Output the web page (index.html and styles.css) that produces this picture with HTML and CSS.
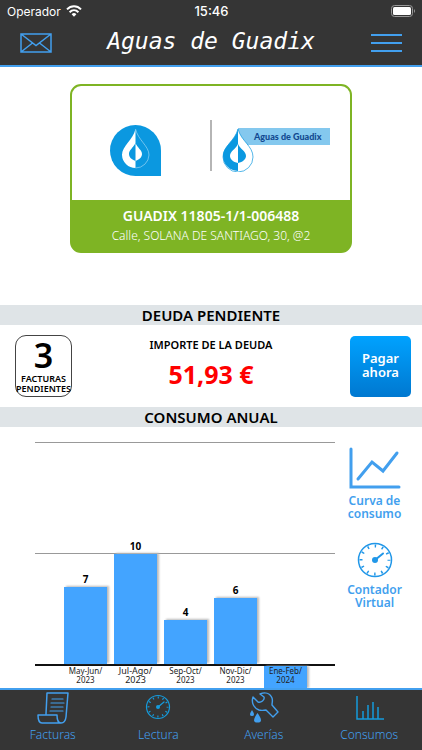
FILE: index.html
```html
<!DOCTYPE html>
<html lang="es">
<head>
    <meta charset="UTF-8">
    <meta name="viewport" content="width=device-width, initial-scale=1.0">
    <title>Aguas de Guadix</title>
    <link rel="stylesheet" href="styles.css">
</head>
<body>
    <header>
        <div class="status">
            <span class="operador">Operador
                <svg width="16" height="12" viewBox="0 0 16 12" fill="none" stroke="#fff" stroke-width="2">
                    <path d="M1 4.4C5 .3 11 .3 15 4.4M3.6 7.2c2.600-2.600 6.200-2.600 8.800 0"/>
                    <path d="M5.600 9.200Q8 7 10.400 9.200L8 11.700z" fill="#fff" stroke="none"/>
                </svg>
            </span>
            <span class="hora">15:46</span>
            <svg class="bateria" width="25" height="12" viewBox="0 0 25 12">
                <rect x=".5" y=".5" width="21" height="11" rx="3" fill="none" stroke="#999"/>
                <rect x="2" y="2" width="18" height="8" rx="1.500" fill="#fff"/>
                <path d="M23 4q2 2 0 4z" fill="#999"/>
            </svg>
        </div>
        <div class="barra">
            <button class="icono" aria-label="Mensajes">
                <svg width="32" height="20" viewBox="0 0 32 20" fill="none" stroke="#429fee" stroke-width="1.500">
                    <path d="M1 1h30v18H1zM1 1l15 11.500L31 1M1 19l11.500-9M31 19l-11.500-9"/>
                </svg>
            </button>
            <h1>Aguas de Guadix</h1>
            <button class="icono" aria-label="Menú">
                <svg width="32" height="20" viewBox="0 0 32 20" stroke="#429fee" stroke-width="2">
                    <path d="M1 2h31M1 10h31M1 18h31"/>
                </svg>
            </button>
        </div>
    </header>

    <main>
        <section class="contrato">
            <div class="logos">
                <svg width="51" height="51" viewBox="0 0 51 51">
                    <path d="M51 51H25.500A25.500 25.500 0 1 1 51 25.500z" fill="#0b98e0"/>
                    <path d="M25.500 4C23 15 12 21 12 30a13.500 13.500 0 0 0 13.500 13V36C21 34 19 32 19 29c0-4 4-6 6.500-11z" fill="#fff"/>
                    <path d="M25.500 4C28 15 39 21 39 30a13.500 13.500 0 0 1-13.500 13" fill="none" stroke="#9bd4f3" stroke-width=".7"/>
                    <path d="M25.500 18c2 5 6.500 7 6.500 11 0 3-2 5-6.500 7z" fill="#fff"/>
                </svg>
                <span class="separador"></span>
                <div class="marca">
                    <svg width="32" height="44" viewBox="0 0 32 44">
                        <path d="M16 1C13 13 1 18 1 29a15 15 0 0 0 30 0C31 18 19 13 16 1z" fill="#fff" stroke="#0b98e0" stroke-width=".7"/>
                        <path d="M16 1C13 13 1 18 1 28a15 15 0 0 0 15 15V35C11 34 8 31 8 28c0-5 6-7 8-12z" fill="#0b98e0"/>
                        <path d="M16 16c2 5 8 7 8 12 0 3-3 6-8 7z" fill="#0b98e0"/>
                    </svg>
                    <span>Aguas de Guadix</span>
                </div>
            </div>
            <div class="datos">
                <strong>GUADIX 11805-1/1-006488</strong>
                <span>Calle, SOLANA DE SANTIAGO, 30, @2</span>
            </div>
        </section>

        <h2>DEUDA PENDIENTE</h2>
        <section class="deuda">
            <div class="pendientes">
                <strong>3</strong>
                <span>FACTURAS PENDIENTES</span>
            </div>
            <div class="importe">
                <span>IMPORTE DE LA DEUDA</span>
                <strong>51,93 €</strong>
            </div>
            <button class="pagar">Pagar ahora</button>
        </section>

        <h2>CONSUMO ANUAL</h2>
        <section class="consumo">
            <div class="grafica">
                <div class="barras">
                    <div class="columna"><span>7</span><div class="valor" style="height: 35%"></div></div>
                    <div class="columna"><span>10</span><div class="valor" style="height: 50%"></div></div>
                    <div class="columna"><span>4</span><div class="valor" style="height: 20%"></div></div>
                    <div class="columna"><span>6</span><div class="valor" style="height: 30%"></div></div>
                    <div class="columna"></div>
                </div>
                <div class="meses">
                    <span>May-Jun/<br>2023</span>
                    <span class="grande">Jul-Ago/<br>2023</span>
                    <span>Sep-Oct/<br>2023</span>
                    <span>Nov-Dic/<br>2023</span>
                    <span class="negativo">Ene-Feb/<br>2024</span>
                </div>
            </div>
            <div class="enlaces">
                <a href="#curva">
                    <svg width="52" height="42" viewBox="0 0 52 42" fill="none" stroke="#429fee" stroke-width="3" stroke-linecap="round">
                        <path d="M2 2v38h48"/>
                        <path d="M9 32L23 15l11 9L48 6"/>
                    </svg>
                    Curva de consumo
                </a>
                <a href="#contador">
                    <svg width="36" height="36" viewBox="0 0 36 36" fill="none" stroke="#2197e8" stroke-width="1.500" stroke-linecap="round">
                        <circle cx="18" cy="18" r="16.500"/>
                        <circle cx="18" cy="18" r="14" stroke-dasharray="1.500 5.830" stroke-width="3" stroke-linecap="butt" stroke-dashoffset=".75"/>
                        <path d="M18 18l8-6.500" stroke-width="2"/>
                        <circle cx="18" cy="18" r="3" fill="#2197e8" stroke="none"/>
                    </svg>
                    Contador Virtual
                </a>
            </div>
        </section>
    </main>

    <nav>
        <a href="#facturas">
            <svg width="32" height="32" viewBox="0 0 32 32" fill="none" stroke="#429fee" stroke-width="1.500" stroke-linejoin="round" stroke-linecap="round">
                <path d="M9 22L10 1h21l-2 24c-.5 4-2 6-5 6H5c-3 0-4-3-4-8h19c0 5 1 8 4 8"/>
                <path d="M15 7h11M14 11h13M14 15h12M13 19h13" stroke-width="1.200"/>
            </svg>
            Facturas
        </a>
        <a href="#lectura">
            <svg width="32" height="32" viewBox="0 0 32 32" fill="none" stroke="#159bdc" stroke-width="1.200">
                <circle cx="16" cy="15" r="11.500"/>
                <circle cx="16" cy="15" r="9.500" stroke-dasharray="1.200 3.774" stroke-width="2" stroke-dashoffset=".6"/>
                <path d="M16 15l6-5" stroke-linecap="round"/>
                <circle cx="16" cy="15" r="2" fill="#159bdc" stroke="none"/>
            </svg>
            Lectura
        </a>
        <a href="#averias">
            <svg width="32" height="32" viewBox="0 0 32 32" fill="none" stroke="#429fee" stroke-width="1.400" stroke-linejoin="round">
                <path d="M12 2c5-2 10-1 12 4 1 3 0 4 0 7l6 7-5 5-7-7c-2 0-4 1-7 0-5-2-8-7-6-13l5 5c3 1 7-2 6-5z"/>
                <path d="M9.500 21q7 9.500 0 9.500t0-9.500zM4 18q4 6 0 6t0-6z" fill="#429fee" stroke="none"/>
            </svg>
            Averías
        </a>
        <a href="#consumos">
            <svg width="32" height="32" viewBox="0 0 32 32" fill="none" stroke="#159bdc" stroke-width="1.500">
                <path d="M4 4v23h27M10 27v-8M15 27V13M20 27V10M25 27V15"/>
            </svg>
            Consumos
        </a>
    </nav>
</body>
</html>
```
FILE: styles.css
```css
* {
    box-sizing: border-box;
}
body {
    font-family: "Noto Sans", "Open Sans", sans-serif;
    margin: 0;
    min-height: 100vh;
    display: flex;
    flex-direction: column;
    background-color: #fff;
    color: #000;
}
svg {
    display: block;
}
button {
    font-family: inherit;
    border: none;
    cursor: pointer;
}
a {
    text-decoration: none;
    color: #429fee;
}
header {
    background-color: #353535;
    border-bottom: 2px solid #429fee;
    color: #fff;
    padding-bottom: 5px;
}
.status {
    display: grid;
    grid-template-columns: 1fr auto 1fr;
    align-items: center;
    height: 22px;
    padding: 0 6px 0 7px;
    font-family: Inter, sans-serif;
    font-size: 12px;
}
.operador {
    display: flex;
    align-items: center;
    gap: 5px;
}
.hora {
    font-size: 13px;
    font-weight: 500;
}
.bateria {
    justify-self: end;
}
.barra {
    display: flex;
    align-items: center;
    justify-content: space-between;
    height: 38px;
    padding: 0 20px;
}
.icono {
    padding: 0;
    margin-top: 4px;
    background: none;
}
h1 {
    margin: 0;
    font-family: "DejaVu Sans Mono", monospace;
    font-size: 23px;
    font-weight: normal;
    font-style: italic;
}
main {
    flex: 1;
    display: flex;
    flex-direction: column;
}
.contrato {
    margin: 17px 70px 52px;
    border: 2px solid #7eb424;
    border-radius: 11px;
    background-color: #7eb424;
    overflow: hidden;
}
.logos {
    display: flex;
    align-items: center;
    justify-content: center;
    height: 114px;
    padding: 14px 0 0 18px;
    background-color: #fff;
}
.separador {
    width: 2px;
    height: 51px;
    margin: -10px 10px 0 49px;
    background-color: #b5b5b5;
}
.marca {
    display: flex;
    align-items: flex-start;
}
.marca span {
    margin-left: -16px;
    padding-left: 16px;
    width: 92px;
    height: 17px;
    background-color: #84c8ee;
    color: #124a91;
    font-family: Lato, sans-serif;
    font-size: 9px;
    font-weight: 900;
    line-height: 17px;
    white-space: nowrap;
}
.marca svg {
    position: relative;
    z-index: 1;
}
.datos {
    height: 51px;
    padding-top: 6px;
    text-align: center;
    color: #fff;
    line-height: 20px;
}
.datos strong,
.datos span {
    display: block;
}
.datos strong {
    font-size: 14px;
    font-weight: 600;
}
.datos span {
    font-size: 12px;
    font-weight: 300;
}
h2 {
    margin: 0;
    background-color: #dfe4e7;
    font-size: 15px;
    font-weight: 600;
    line-height: 20px;
    text-align: center;
}
.deuda {
    display: flex;
    align-items: center;
    justify-content: space-between;
    height: 82px;
    padding: 0 11px 0 15px;
}
.pendientes {
    width: 57px;
    height: 62px;
    border: 1px solid #444;
    border-radius: 11px;
    text-align: center;
}
.pendientes strong {
    display: block;
    font-size: 34px;
    font-weight: 600;
    line-height: 38px;
}
.pendientes span {
    display: flex;
    justify-content: center;
    font-size: 9px;
    font-weight: 600;
    line-height: 10px;
}
.importe {
    display: flex;
    flex-direction: column;
    align-items: center;
    padding-bottom: 8px;
}
.importe span {
    font-size: 11px;
    font-weight: 600;
    line-height: 24px;
}
.importe strong {
    color: #f00;
    font-size: 25px;
    line-height: 34px;
}
.pagar {
    width: 61px;
    height: 61px;
    padding: 0 8px 2px;
    border-radius: 5px;
    background: linear-gradient(#00a2ff, #0078d0);
    color: #fff;
    font-size: 13px;
    font-weight: 600;
    line-height: 14px;
}
.consumo {
    flex: 1;
    display: flex;
    padding: 15px 10px 0 35px;
}
.grafica {
    flex: 1;
    display: flex;
    flex-direction: column;
}
.barras,
.meses {
    display: flex;
    gap: 7px;
    padding: 0 28px 0 29px;
}
.barras {
    height: 224px;
    border-top: 1px solid #999;
    border-bottom: 2px solid #111;
    background: linear-gradient(#999, #999) 0 50% / 100% 1px no-repeat;
}
.columna,
.meses span {
    flex: 1;
    width: 0;
}
.columna {
    display: flex;
    flex-direction: column;
    justify-content: flex-end;
    text-align: center;
    font-size: 10px;
    font-weight: bold;
    line-height: 15px;
}
.valor {
    background-color: #43a4ff;
    box-shadow: 2px -1px 2px #bbb;
}
.meses {
    flex: 1;
    text-align: center;
    font-size: 8px;
    line-height: 9px;
    color: #222;
}
.meses span {
    white-space: nowrap;
}
.meses .grande {
    font-size: 9px;
}
.meses .negativo {
    background-color: #43a4ff;
    box-shadow: 2px 0 2px #bbb;
}
.enlaces {
    width: 73px;
    margin-left: 4px;
    padding-top: 5px;
    display: flex;
    flex-direction: column;
    gap: 22px;
}
.enlaces a {
    display: flex;
    flex-direction: column;
    align-items: center;
    gap: 5px;
    padding-right: 2px;
    font-size: 12px;
    font-weight: 600;
    line-height: 13px;
    text-align: center;
}
nav {
    display: flex;
    height: 62px;
    border-top: 2px solid #429fee;
    background-color: #353535;
}
nav a {
    flex: 1;
    display: flex;
    flex-direction: column;
    align-items: center;
    padding-top: 2px;
    font-size: 12px;
    font-weight: 300;
    line-height: 21px;
}
```
